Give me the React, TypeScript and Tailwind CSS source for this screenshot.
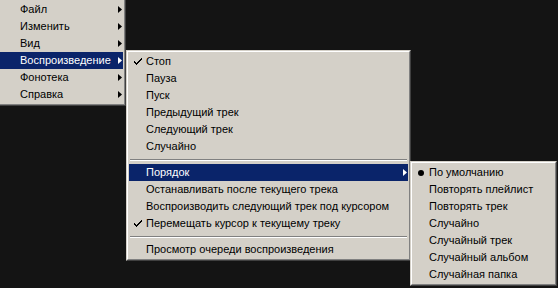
import React from "react";

type Item =
  | { sep: true }
  | { sep?: false; label: string; arrow?: boolean; check?: boolean; bullet?: boolean; hi?: boolean };

const Arrow = ({ white }: { white?: boolean }) => (
  <svg width="4" height="7" viewBox="0 0 4 7" className="shrink-0">
    <path d="M0 0 L4 3.5 L0 7 Z" fill={white ? "#ffffff" : "#000000"} />
  </svg>
);

const Check = () => (
  <svg width="8" height="7" viewBox="0 0 8 7">
    <path d="M0 3h1v1h1v1h1V4h1V3h1V2h1V1h1V0h1v2H7v1H6v1H5v1H4v1H3v1H2V6H1V5H0z" fill="#000" />
  </svg>
);

const Bullet = () => (
  <svg width="6" height="6" viewBox="0 0 6 6">
    <circle cx="3" cy="3" r="3" fill="#000" />
  </svg>
);

function Menu({
  items,
  className,
  textPad,
}: {
  items: Item[];
  className: string;
  textPad: string;
}) {
  return (
    <div
      className={
        "absolute bg-[#d4d0c8] border-t border-l border-t-[#d4d0c8] border-l-[#d4d0c8] border-r border-b border-r-[#404040] border-b-[#404040] " +
        className
      }
    >
      <div className="flex flex-col border-t border-l border-t-white border-l-white border-r border-b border-r-[#808080] border-b-[#808080] p-px">
        {items.map((it, i) =>
          it.sep ? (
            <div key={i} className="h-[9px] flex flex-col justify-center px-px">
              <div className="h-px bg-[#808080]" />
              <div className="h-px bg-white" />
            </div>
          ) : (
            <div
              key={i}
              className={
                "h-[17px] flex items-center " +
                (it.hi ? "bg-[#0a246a] text-white" : "text-black")
              }
            >
              <div className={"shrink-0 flex items-center justify-center " + textPad}>
                {it.check && <Check />}
                {it.bullet && <Bullet />}
              </div>
              <span className="flex-1 whitespace-nowrap">{it.label}</span>
              <div className="w-[7px] shrink-0 flex items-center justify-end pr-px">
                {it.arrow && <Arrow white={it.hi} />}
              </div>
            </div>
          )
        )}
      </div>
    </div>
  );
}

export default function App() {
  const m1: Item[] = [
    { label: "Файл", arrow: true },
    { label: "Изменить", arrow: true },
    { label: "Вид", arrow: true },
    { label: "Воспроизведение", arrow: true, hi: true },
    { label: "Фонотека", arrow: true },
    { label: "Справка", arrow: true },
  ];
  const m2: Item[] = [
    { label: "Стоп", check: true },
    { label: "Пауза" },
    { label: "Пуск" },
    { label: "Предыдущий трек" },
    { label: "Следующий трек" },
    { label: "Случайно" },
    { sep: true },
    { label: "Порядок", arrow: true, hi: true },
    { label: "Останавливать после текущего трека" },
    { label: "Воспроизводить следующий трек под курсором" },
    { label: "Перемещать курсор к текущему треку", check: true },
    { sep: true },
    { label: "Просмотр очереди воспроизведения" },
  ];
  const m3: Item[] = [
    { label: "По умолчанию", bullet: true },
    { label: "Повторять плейлист" },
    { label: "Повторять трек" },
    { label: "Случайно" },
    { label: "Случайный трек" },
    { label: "Случайный альбом" },
    { label: "Случайная папка" },
  ];
  return (
    <div
      className="relative w-[558px] h-[288px] bg-[#141414] overflow-hidden text-[11px] leading-none"
      style={{ fontFamily: '"Liberation Sans", Arial, sans-serif' }}
    >
      <Menu items={m1} className="left-[-3px] top-[-2px] w-[129px]" textPad="w-[20px]" />
      <Menu items={m2} className="left-[126px] top-[50px] w-[285px]" textPad="w-[17px]" />
      <Menu items={m3} className="left-[410px] top-[161px] w-[147px]" textPad="w-[16px]" />
    </div>
  );
}
